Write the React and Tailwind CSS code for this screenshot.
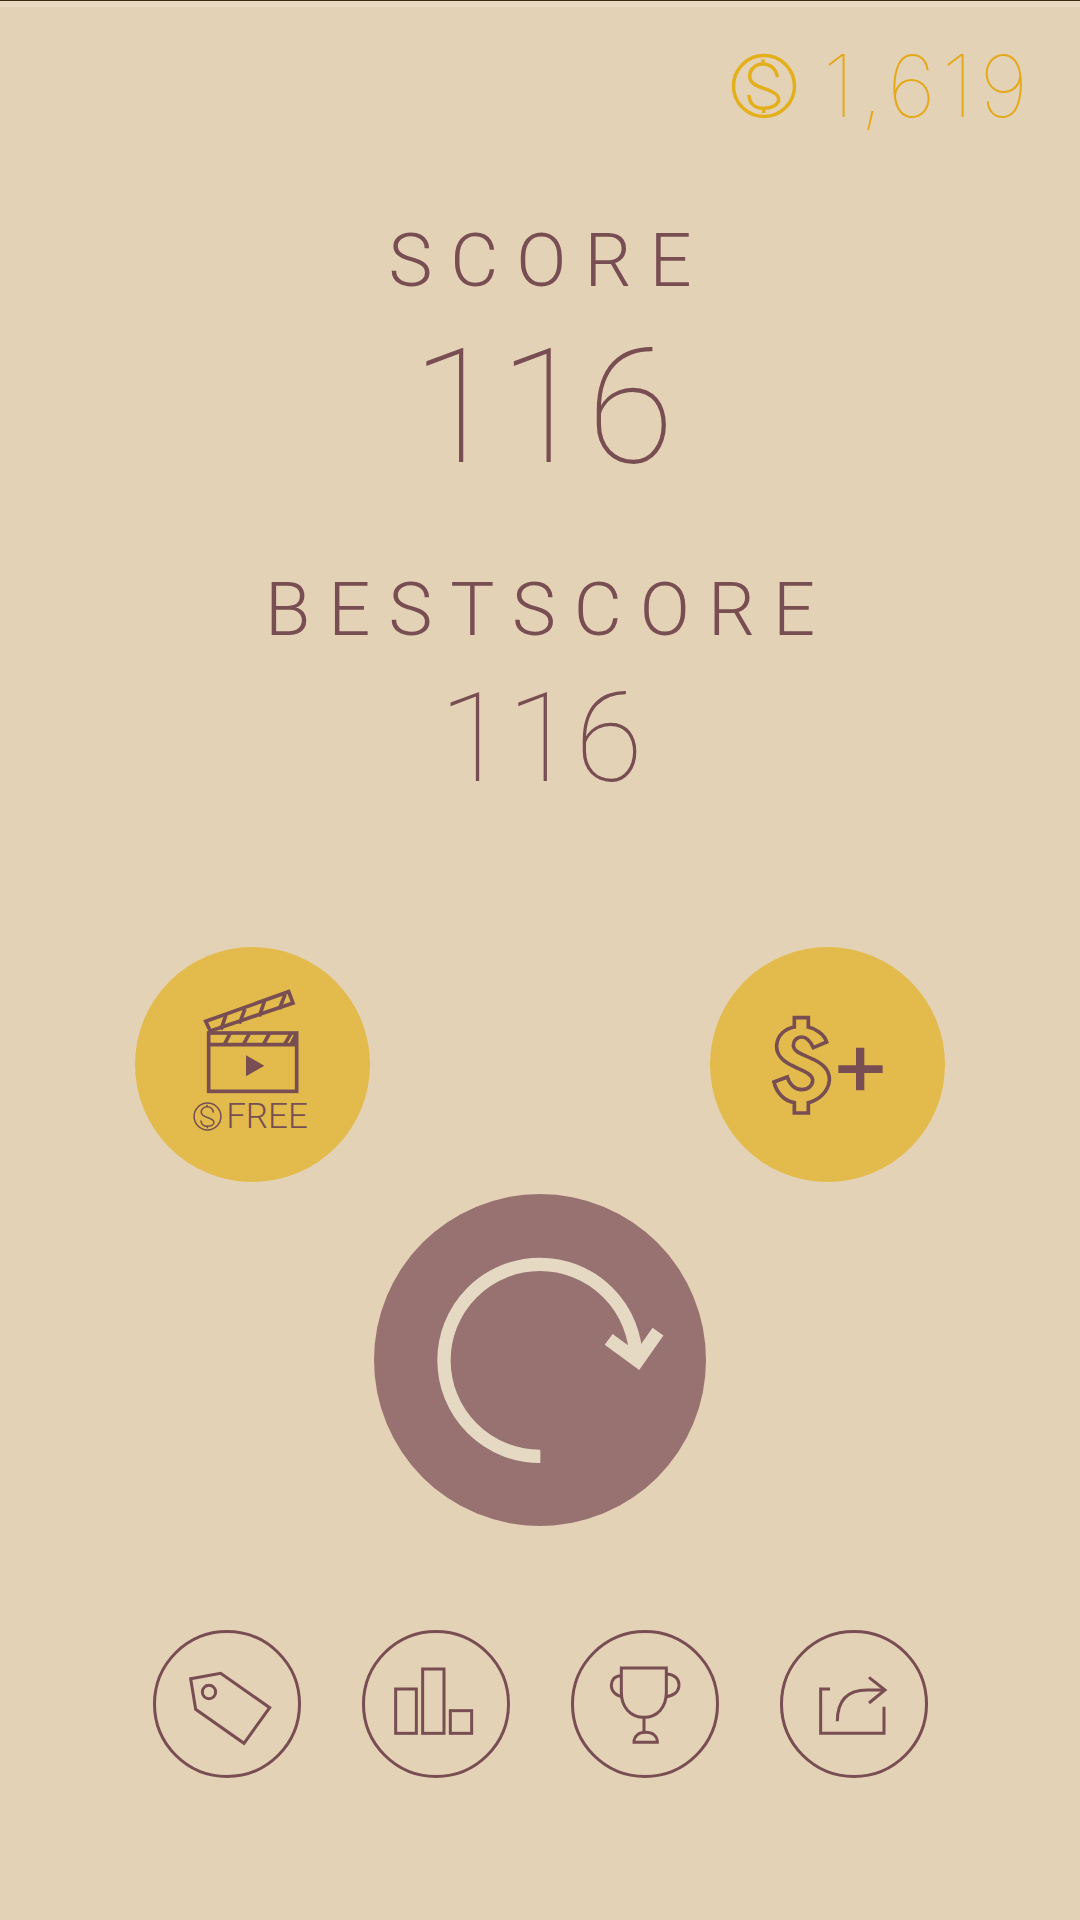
const CoinIcon = ({ className }) => (
  <svg viewBox="-33 -33 66 66" fill="none" stroke="currentColor" strokeWidth="3.5" className={className}>
    <circle cx="0" cy="0" r="30.5" />
    <path d="M13.3 -8.7C12.3 -17.7 5.7 -22 -1 -22C-9.3 -22 -14.3 -16 -14.3 -10C-14.3 -2.7 -7.7 0 -.3 2.3C7.3 4.7 14.7 8 14.7 13.3C14.7 19 7.3 22.3 -.3 22.3C-7.7 22.3 -14.3 19 -15 9" />
    <path d="M-1 -26.5V-22M-.3 22.3V27" />
  </svg>
)

const Clapper = () => (
  <svg viewBox="240 175 300 321" fill="none" stroke="#784e52" strokeWidth="11" className="w-[100px] h-[107px]">
    <path d="M254 275L503 186L516 220L268 304Z" />
    <path d="M300 300L315 255M355 282L372 238M415 260L430 215M475 238L492 195" />
    <rect x="263" y="310" width="264" height="175" />
    <path d="M263 345H527" />
    <path d="M310 345L327 312M367 345L385 312M427 345L445 312M490 345L510 312" />
    <path d="M505 342L527 342L527 312L520 312Z" fill="#784e52" stroke="none" />
    <path d="M375 377L430 408L375 440Z" fill="#784e52" stroke="none" />
  </svg>
)

const DollarPlus = () => (
  <svg viewBox="30 50 705 705" className="w-full h-full" fill="none">
    <path
      d="M283 262H325V290C345 295 372 310 380 335L340 352C330 330 318 320 305 320C290 320 280 332 280 345C280 365 310 372 335 385C370 400 390 420 388 450C385 485 355 510 325 517V548H283V517C255 512 230 490 222 455L262 440C268 462 285 478 305 478C325 478 338 465 338 450C338 432 310 422 285 410C250 395 228 375 230 345C232 315 255 295 283 290Z"
      stroke="#784e52"
      strokeWidth="11"
    />
    <path d="M468 352H493V405H548V428H493V480H468V428H415V405H468Z" fill="#784e52" />
  </svg>
)

const ReplayIcon = () => (
  <svg viewBox="12 12 996 996" className="w-full h-full" fill="none" stroke="#e6d9c3" strokeWidth="40">
    <path d="M511 799A288 288 0 1 1 798 510" />
    <path d="M716 448L803 512L864 425" />
  </svg>
)

const RoundButton = ({ viewBox, children }) => (
  <button className="w-[148px] h-[148px] rounded-full border-[3.5px] border-[#784e52]">
    <svg viewBox={viewBox} className="w-full h-full" fill="none" stroke="#784e52" strokeWidth="9">
      {children}
    </svg>
  </button>
)

export default function App() {
  return (
    <div className="w-[1080px] h-[1920px] flex flex-col bg-[#e4d2b7] text-[#784e52] font-['Roboto',sans-serif] overflow-hidden">
      <div className="h-px bg-[#3a2d10]" />
      <div className="h-[6px] bg-[#e8d9c2]" />

      <div className="mt-[35px] pr-[46px] flex justify-end items-center text-[#e3a91a]">
        <CoinIcon className="w-[66px] h-[66px] text-[#e3b01c] mr-[26px]" />
        <span className="text-[86px] leading-[88px] tracking-[6px] font-['Inter',sans-serif] font-thin">1,619</span>
      </div>

      <div className="flex flex-col items-center">
        <div className="mt-[95px] pl-[18px] text-[74px] leading-[72px] font-[350] tracking-[18px]">SCORE</div>
        <div className="mt-[31px] ml-[6px] text-[160px] leading-none font-thin">116</div>
        <div className="mt-[86px] pl-[18px] text-[74px] leading-[72px] font-[350] tracking-[18px]">BESTSCORE</div>
        <div className="mt-[31px] ml-[2px] text-[124px] leading-none font-thin">116</div>
      </div>

      <div className="mt-[146px] px-[135px] flex justify-between">
        <button className="w-[235px] h-[235px] rounded-full bg-[#e3bb4c] flex flex-col items-center pt-[41px] pr-[4px]">
          <Clapper />
          <div className="mt-[4px] flex items-center gap-[4px]">
            <CoinIcon className="w-[29px] h-[29px]" />
            <span className="text-[35px] leading-none font-light">FREE</span>
          </div>
        </button>
        <button className="w-[235px] h-[235px] rounded-full bg-[#e3bb4c]">
          <DollarPlus />
        </button>
      </div>

      <button className="mt-[12px] self-center w-[332px] h-[332px] rounded-full bg-[#987271]">
        <ReplayIcon />
      </button>

      <div className="mt-[104px] flex justify-center gap-[61px]">
        <RoundButton viewBox="46 66 426 426">
          <path d="M150 203L240 187L387 290L310 397L165 295Z" />
          <circle cx="205" cy="243" r="20" />
        </RoundButton>
        <RoundButton viewBox="673 67 426 426">
          <rect x="765" y="235" width="62" height="133" />
          <rect x="846" y="175" width="64" height="193" />
          <rect x="929" y="300" width="64" height="68" />
        </RoundButton>
        <RoundButton viewBox="70 67 426 426">
          <path d="M212 172H347V245C347 290 320 320 280 320C240 320 212 290 212 245Z" />
          <path d="M212 195C190 195 182 210 182 225C182 240 195 255 215 258" />
          <path d="M347 190C370 190 385 205 385 222C385 245 365 258 343 258" />
          <path d="M280 320V365" />
          <path d="M250 395H320C320 375 305 365 285 365C265 365 250 375 250 395Z" />
        </RoundButton>
        <RoundButton viewBox="697 67 426 426">
          <path d="M838 235H810V368H1000V288" />
          <path d="M860 332C860 270 890 238 950 238H1003" />
          <path d="M955 200L1003 238L955 277" />
        </RoundButton>
      </div>
    </div>
  )
}
